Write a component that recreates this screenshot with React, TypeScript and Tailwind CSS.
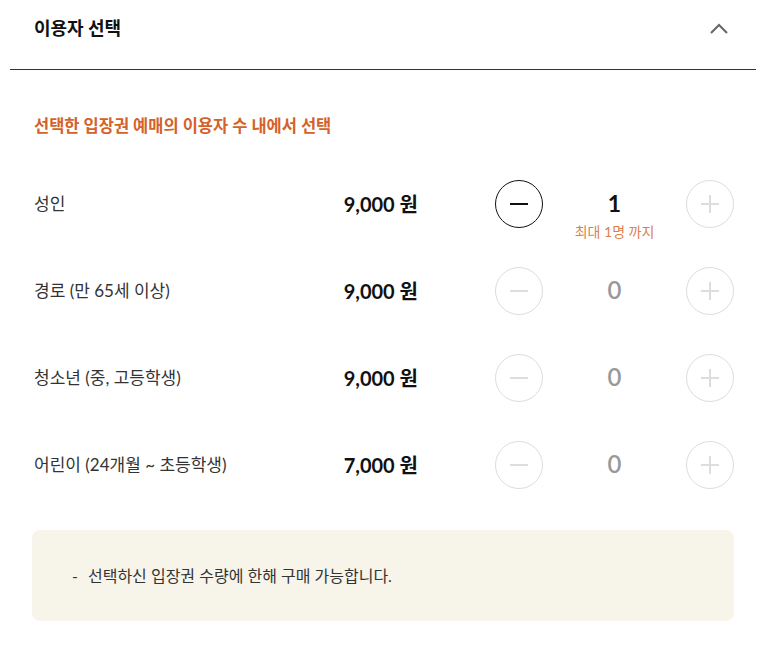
import { useState } from 'react';

const rows = [
  { label: '성인', price: '9,000', max: 1 },
  { label: '경로 (만 65세 이상)', price: '9,000', max: 0 },
  { label: '청소년 (중, 고등학생)', price: '9,000', max: 0 },
  { label: '어린이 (24개월 ~ 초등학생)', price: '7,000', max: 0 },
];

function MinusIcon({ color }: { color: string }) {
  return (
    <svg width="22" height="22" viewBox="0 0 22 22" fill="none">
      <path d="M2 11h18" stroke={color} strokeWidth="2" />
    </svg>
  );
}

function PlusIcon({ color }: { color: string }) {
  return (
    <svg width="22" height="22" viewBox="0 0 22 22" fill="none">
      <path d="M2 11h18M11 2v18" stroke={color} strokeWidth="2" />
    </svg>
  );
}

export default function App() {
  const [counts] = useState([1, 0, 0, 0]);

  return (
    <div className="w-[781px] bg-white pb-[26px]" style={{ fontFamily: 'Lato, "Noto Sans CJK KR", sans-serif' }}>
      <div className="ml-[10px] w-[746px]">
        {/* Header */}
        <div className="flex items-center justify-between border-b border-[#333] pt-[16px] pb-[29px] pl-[24px] pr-[28px]">
          <h2 className="text-[18px] leading-[24px] font-bold text-[#111]">이용자 선택</h2>
          <svg width="18" height="12" viewBox="0 0 18 12" fill="none">
            <path d="M1 11L9 3l8 8" stroke="#666" strokeWidth="2" />
          </svg>
        </div>

        <div className="px-[22px]">
          <p className="pt-[45px] pl-[2px] text-[16.5px] leading-[22px] font-bold text-[#d4622a]">
            선택한 입장권 예매의 이용자 수 내에서 선택
          </p>

          <div className="mt-[23px]">
            {rows.map((row, i) => {
              const active = counts[i] > 0;
              return (
                <div key={i} className="flex items-center h-[87px]">
                  <div className="flex-1 pl-[2px] text-[17px] text-[#333]">{row.label}</div>
                  <div className="text-[20px] font-bold text-[#111]">{row.price} 원</div>
                  <button
                    className={`ml-[77px] w-[48px] h-[48px] rounded-full border flex items-center justify-center ${
                      active ? 'border-[#111]' : 'border-[#ddd]'
                    }`}
                  >
                    <MinusIcon color={active ? '#111' : '#ddd'} />
                  </button>
                  <div className="relative w-[143px] text-center">
                    <span className={`leading-[28px] ${active ? 'text-[23px] font-bold text-[#111]' : 'text-[24px] font-semibold text-[#999]'}`}>
                      {counts[i]}
                    </span>
                    {active && (
                      <span className="absolute left-0 right-0 top-[33px] text-[14px] leading-[20px] text-[#dc7f50]">
                        최대 {row.max}명 까지
                      </span>
                    )}
                  </div>
                  <button className="w-[48px] h-[48px] rounded-full border border-[#ddd] flex items-center justify-center">
                    <PlusIcon color="#ddd" />
                  </button>
                </div>
              );
            })}
          </div>

          <div className="mt-[22px] h-[91px] rounded-[8px] bg-[#f7f4ea] flex items-center pl-[40px]">
            <p className="text-[16px] text-[#333]">
              <span className="mr-[10px]">-</span>선택하신 입장권 수량에 한해 구매 가능합니다.
            </p>
          </div>
        </div>
      </div>
    </div>
  );
}
